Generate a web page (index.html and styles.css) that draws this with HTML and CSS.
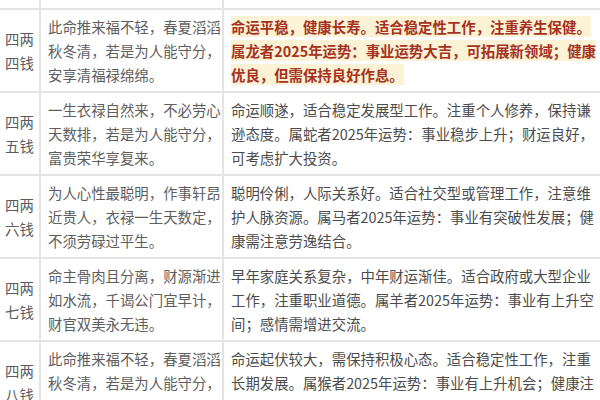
FILE: index.html
```html
<!DOCTYPE html>
<html lang="zh-CN">
<head>
<meta charset="utf-8">
<link rel="stylesheet" href="styles.css">
</head>
<body>
<div class="table">
  <div class="row">
    <div class="cell weight">四两<br>三钱</div>
    <div class="cell verse">此命福气果如何，僧道门中<br>衣禄多，离祖出家方得妙，<br>终朝拜佛念弥陀。</div>
    <div class="cell note">性格温和，适合宗教文化类工作。属兔者2025年运势：<br>事业平稳发展；注意身体健康，<br>多加休息。</div>
  </div>
  <div class="row">
    <div class="cell weight">四两<br>四钱</div>
    <div class="cell verse">此命推来福不轻，春夏滔滔<br>秋冬清，若是为人能守分，<br>安享清福禄绵绵。</div>
    <div class="cell note"><span class="mark">命运平稳，健康长寿。适合稳定性工作，注重养生保健。<br>属龙者2025年运势：事业运势大吉，可拓展新领域；健康<br>优良，但需保持良好作息。</span></div>
  </div>
  <div class="row">
    <div class="cell weight">四两<br>五钱</div>
    <div class="cell verse">一生衣禄自然来，不必劳心<br>天数排，若是为人能守分，<br>富贵荣华享复来。</div>
    <div class="cell note">命运顺遂，适合稳定发展型工作。注重个人修养，保持谦<br>逊态度。属蛇者2025年运势：事业稳步上升；财运良好，<br>可考虑扩大投资。</div>
  </div>
  <div class="row">
    <div class="cell weight">四两<br>六钱</div>
    <div class="cell verse">为人心性最聪明，作事轩昂<br>近贵人，衣禄一生天数定，<br>不须劳碌过平生。</div>
    <div class="cell note">聪明伶俐，人际关系好。适合社交型或管理工作，注意维<br>护人脉资源。属马者2025年运势：事业有突破性发展；健<br>康需注意劳逸结合。</div>
  </div>
  <div class="row">
    <div class="cell weight">四两<br>七钱</div>
    <div class="cell verse">命主骨肉且分离，财源渐进<br>如水流，千谒公门宜早计，<br>财官双美永无违。</div>
    <div class="cell note">早年家庭关系复杂，中年财运渐佳。适合政府或大型企业<br>工作，注重职业道德。属羊者2025年运势：事业有上升空<br>间；感情需增进交流。</div>
  </div>
  <div class="row">
    <div class="cell weight">四两<br>八钱</div>
    <div class="cell verse">此命推来福不轻，春夏滔滔<br>秋冬清，若是为人能守分，<br>安享清福禄绵绵。</div>
    <div class="cell note">命运起伏较大，需保持积极心态。适合稳定性工作，注重<br>长期发展。属猴者2025年运势：事业有上升机会；健康注<br>意饮食规律。</div>
  </div>
</div>
</body>
</html>
```
FILE: styles.css
```css
html, body {
  margin: 0;
  padding: 0;
  background: #ffffff;
  overflow: hidden;
}
body {
  font-family: "Microsoft YaHei", "Noto Sans CJK SC", "Noto Sans", sans-serif;
  font-size: 14.4px;
  line-height: 24px;
  color: #5a5a5a;
}
.table {
  width: 640px;
  margin-top: -73px;
}
.row {
  display: grid;
  grid-template-columns: 41px 183px 416px;
  border-bottom: 2px solid #e4e4e4;
}
.cell {
  padding: 5px 7px 4px;
  border-right: 2px solid #e4e4e4;
  white-space: nowrap;
}
.weight {
  display: flex;
  align-items: center;
  justify-content: center;
  text-align: center;
  padding: 0;
  color: #5c5c5c;
}
.verse {
  color: #5e5e5e;
}
.note {
  color: #4c4c4c;
}
.mark {
  background: #fcf2d6;
  color: #a5321e;
  font-weight: bold;
  box-decoration-break: clone;
  -webkit-box-decoration-break: clone;
}
```
